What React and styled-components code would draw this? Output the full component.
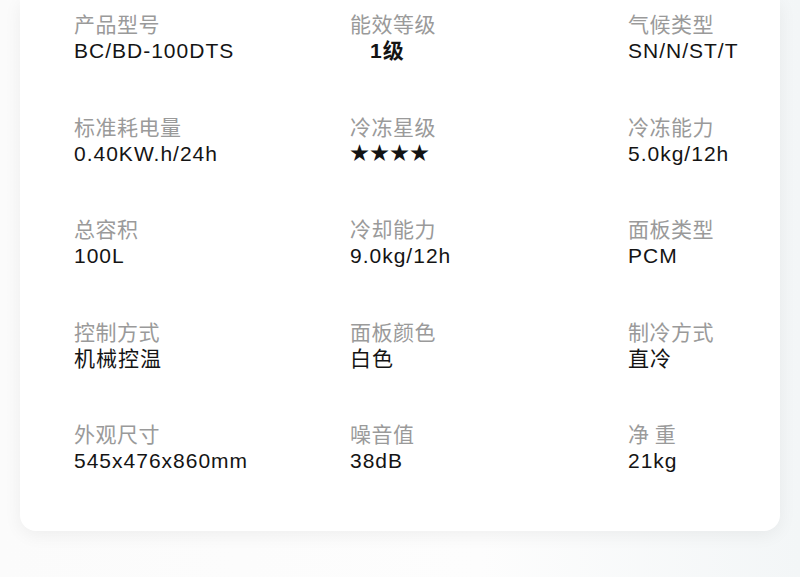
import styled, { createGlobalStyle } from 'styled-components';

const GlobalStyle = createGlobalStyle`
  html, body {
    margin: 0;
    padding: 0;
  }
  body {
    background: linear-gradient(90deg, #fbfbfb 0%, #fdfdfd 60%, #f3f6f7 100%);
    font-family: 'Liberation Sans', 'Noto Sans CJK SC', sans-serif;
  }
`;

const Page = styled.div`
  width: 800px;
  height: 577px;
  padding: 0 20px;
  box-sizing: border-box;
  overflow: hidden;
`;

const Card = styled.div`
  background: #ffffff;
  border-radius: 0 0 16px 16px;
  box-shadow: 0 4px 18px rgba(0, 0, 0, 0.06);
  padding: 9px 0 56px 54px;
  display: grid;
  grid-template-columns: 276px 278px 1fr;
  row-gap: 46.5px;
`;

const Spec = styled.div`
  display: flex;
  flex-direction: column;
`;

const Label = styled.div`
  font-family: 'Noto Sans CJK SC', sans-serif;
  font-size: 21px;
  line-height: 28px;
  letter-spacing: 0.5px;
  color: #9a9a9a;
  white-space: pre;
`;

const Value = styled.div`
  font-family: 'Liberation Sans', 'Noto Sans CJK SC', sans-serif;
  font-size: ${(p) => p.$size || 21}px;
  line-height: 28px;
  letter-spacing: 1px;
  color: #141414;
  padding-left: ${(p) => p.$indent || 0}px;
  font-weight: ${(p) => (p.$bold ? 600 : 400)};
`;

const specs = [
  { label: '产品型号', value: 'BC/BD-100DTS' },
  { label: '能效等级', value: '1级', indent: 20, bold: true },
  { label: '气候类型', value: 'SN/N/ST/T' },
  { label: '标准耗电量', value: '0.40KW.h/24h' },
  { label: '冷冻星级', value: '★★★★', size: 19 },
  { label: '冷冻能力', value: '5.0kg/12h' },
  { label: '总容积', value: '100L' },
  { label: '冷却能力', value: '9.0kg/12h' },
  { label: '面板类型', value: 'PCM' },
  { label: '控制方式', value: '机械控温' },
  { label: '面板颜色', value: '白色' },
  { label: '制冷方式', value: '直冷' },
  { label: '外观尺寸', value: '545x476x860mm' },
  { label: '噪音值', value: '38dB' },
  { label: '净 重', value: '21kg' },
];

const App = () => {
  return (
    <>
      <GlobalStyle />
      <Page>
        <Card>
          {specs.map((s) => (
            <Spec key={s.label}>
              <Label>{s.label}</Label>
              <Value $indent={s.indent} $bold={s.bold} $size={s.size}>
                {s.value}
              </Value>
            </Spec>
          ))}
        </Card>
      </Page>
    </>
  );
};

export default App;
